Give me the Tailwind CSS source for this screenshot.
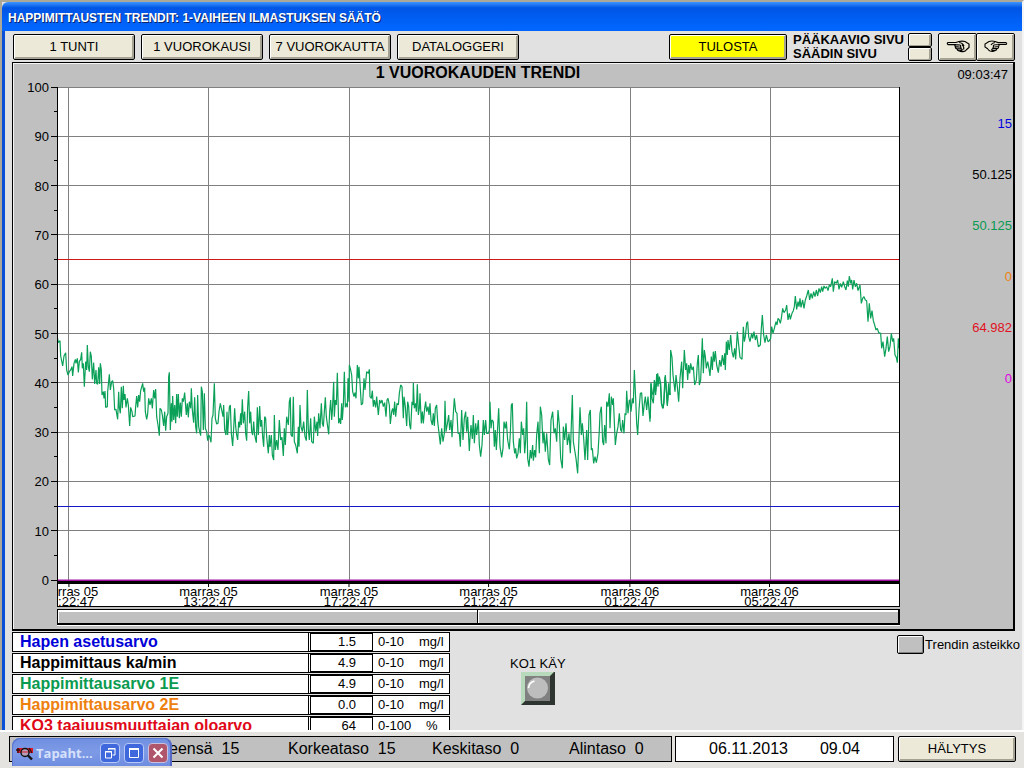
<!DOCTYPE html>
<html lang="fi">
<head>
<meta charset="utf-8">
<title>Happimittausten trendit</title>
<script src="https://cdn.jsdelivr.net/npm/@tailwindcss/browser@4"></script>
</head>
<body class="relative flex h-screen min-h-[600px] flex-col overflow-hidden bg-[#e1e1e1] font-['Liberation_Sans',Arial,sans-serif] text-[13px] leading-4 text-black">

<div class="flex min-h-0 flex-1 flex-col border-l-2 border-r-2 border-t-2 border-l-[#aca899] border-r-[#f4f4f4] border-t-[#aca899]">
  <header class="flex h-[29px] shrink-0 items-center rounded-tl-md bg-linear-to-b from-[#3d95ff] from-0% via-[#0055e5] via-20% to-[#0066ff] to-90% pl-1.5 pt-0.5">
    <h1 class="text-[12px] font-bold text-white [text-shadow:1px_1px_0_#0a246a]">HAPPIMITTAUSTEN TRENDIT: 1-VAIHEEN ILMASTUKSEN SÄÄTÖ</h1>
  </header>

  <div class="flex min-h-0 flex-1 flex-col border-l-3 border-[#0a4fd8] pl-[7px]">
    <nav class="flex h-[31px] shrink-0 items-center gap-1.5 pl-px pr-[7px]">
      <button class="h-[26px] w-[122px] rounded-xs border border-black bg-[#ece9d8] shadow-[inset_1px_1px_0_#fff,inset_-2px_-2px_0_#a5a294]">1 TUNTI</button>
      <button class="h-[26px] w-[122px] rounded-xs border border-black bg-[#ece9d8] shadow-[inset_1px_1px_0_#fff,inset_-2px_-2px_0_#a5a294]">1 VUOROKAUSI</button>
      <button class="h-[26px] w-[122px] whitespace-nowrap rounded-xs border border-black bg-[#ece9d8] shadow-[inset_1px_1px_0_#fff,inset_-2px_-2px_0_#a5a294]">7 VUOROKAUTTA</button>
      <button class="h-[26px] w-[122px] rounded-xs border border-black bg-[#ece9d8] shadow-[inset_1px_1px_0_#fff,inset_-2px_-2px_0_#a5a294]">DATALOGGERI</button>
      <button class="ml-auto h-[26px] w-[118px] rounded-xs border border-black bg-[#ffff00] shadow-[inset_1px_1px_0_#fff,inset_-2px_-2px_0_#a5a294]">TULOSTA</button>
      <div class="flex items-center gap-0.5">
        <div class="flex w-[113px] flex-col whitespace-nowrap font-bold leading-[14px]">
          <label for="main">PÄÄKAAVIO SIVU</label>
          <label for="ctrl">SÄÄDIN SIVU</label>
        </div>
        <div class="flex flex-col">
          <button id="main" class="h-3.5 w-6 rounded-xs border border-black bg-[#ece9d8] shadow-[inset_1px_1px_0_#fff,inset_-2px_-1px_0_#a5a294]"></button>
          <button id="ctrl" class="h-3.5 w-6 rounded-xs border border-black bg-[#ece9d8] shadow-[inset_1px_1px_0_#fff,inset_-2px_-1px_0_#a5a294]"></button>
        </div>
      </div>
      <div class="flex">
        <button aria-label="Edellinen" class="flex h-7 w-[39px] items-center justify-center rounded-xs border border-black bg-[#ece9d8] shadow-[inset_1px_1px_0_#fff,inset_-2px_-2px_0_#a5a294]">
          <svg width="24" height="13" viewBox="0 0 24 13" fill="none" stroke="#000" stroke-width="1.2"><path d="M10 4.600H2Q.6 3.600 2 2.500H10L13 1.500Q16 .6 19 1.500L23 4V7.500L20 10M9.500 4.600L14 5M10 4.600Q8 5.500 9.500 6.600L13 7M9.500 6.600Q9 8.500 11 8.800L14 8.800M11 8.800Q11 10.400 13 10.800L16 10.400M13 10.800Q15 12.200 18 11.400Q20 11 20 10M13 2.500Q17 3 18 6M14 5Q15.500 6 14 7Q16 7.800 14.500 8.800Q17 9 16 10.400M16 4.500Q18.500 7 17.500 9.500"/></svg>
        </button>
        <button aria-label="Seuraava" class="-ml-px flex h-7 w-[39px] items-center justify-center rounded-xs border border-black bg-[#ece9d8] shadow-[inset_1px_1px_0_#fff,inset_-2px_-2px_0_#a5a294]">
          <svg width="24" height="13" viewBox="0 0 24 13" fill="none" stroke="#000" stroke-width="1.1"><path transform="matrix(-1 0 0 1 24 0)" d="M10 4.500H2Q.6 3.600 2 2.600H10L13 1.500Q16 .6 19 1.500L23 4V7L20 9M9.500 4.500L14 5M10 4.500Q8 5.500 9.500 6.500L13 7M9.500 6.500Q9 8.500 11 8.600L14 8.600M11 8.600Q11 10.400 13 10.600L16 10.400M13 10.600Q15 12 18 11Q20 10 20 9M13 2.500Q16 3 17 5M14 5Q15.500 6 14 7Q16 7.800 14.500 8.600Q17 9 16 10.400"/></svg>
        </button>
      </div>
    </nav>

    <main class="mr-[7px] flex min-h-0 flex-1 border-b-2 border-l border-r-2 border-t border-black bg-[#c0c0c0] shadow-[inset_1px_1px_0_#f4f4f4]">
      <section class="flex min-w-0 flex-1 flex-col">
        <h2 class="flex h-6 shrink-0 items-center justify-center pb-1 pl-11 text-[16px] font-bold">1 VUOROKAUDEN TRENDI</h2>
        <div class="flex min-h-0 flex-1">
          <div class="flex w-11 flex-col pb-12">
            <svg id="yaxis" class="min-h-0 w-full flex-1 overflow-visible" stroke="none" text-anchor="end" shape-rendering="crispEdges"></svg>
          </div>
          <div class="-mr-px flex min-w-0 flex-1 flex-col">
            <svg class="min-h-0 w-full flex-1 border-l border-r border-black bg-white" viewBox="58 87 841 494" preserveAspectRatio="none" fill="none">
              <g stroke="#808080" stroke-width="1" shape-rendering="crispEdges">
                <path d="M57 87.500H900M57 136.500H900M57 185.500H900M57 234.500H900M57 284.500H900M57 333.500H900M57 382.500H900M57 432.500H900M57 481.500H900M57 530.500H900"/>
                <path d="M68.500 87V581M208.500 87V581M349.500 87V581M489.500 87V581M630.500 87V581M770.500 87V581"/>
              </g>
              <rect x="57" y="259" width="843" height="1" class="fill-[#d01818]"/>
              <rect x="57" y="506" width="843" height="1" class="fill-[#1818c8]"/>
              <rect x="57" y="579.500" width="843" height="1.500" class="fill-[#a010a0]"/>
              <g stroke="#0aa058" stroke-width="3.6" stroke-linejoin="bevel">
                <polyline transform="translate(50 320) scale(.33333)" points="20,40 25,68 30,62 32,108 38,138 42,108 47,98 50,150 54,165 58,155 62,150 66,140 68,168 72,130 76,118 78,130 82,115 85,157 88,125 92,118 95,97 97,145 100,130 103,200 107,125 110,150 112,75 115,140 118,155 121,95 124,110 127,178 131,128 134,192 138,150 140,190 143,193 146,142 149,192 151,130 154,150 156,225 160,215 162,235 165,213 167,262 172,260 173,215 178,163 181,210 185,185 188,182 191,205 194,270 198,268 203,298 206,215 208,262 211,280 214,200 217,265 220,197 222,240 225,222 228,262 232,235 235,255 239,318 242,262 246,275 248,290 255,288 257,260 260,228 263,262 266,225 269,245 272,212 278,190 281,215 284,203 286,275 290,298 293,282 296,235 300,255 304,235 307,265 311,210 314,235 317,207 320,290 324,315 328,347 330,265 334,270 337,285 341,318 344,275 347,332 350,290 354,280 356,170 358,157 361,330 364,250 366,305 368,228 371,300 374,255 377,310 380,222 382,290 385,222 388,295 391,248 394,290 397,235 400,245 404,218 407,260 409,285 412,250 415,292 418,245 422,265 424,205 427,270 431,308 434,232 437,320 440,340 443,225 446,320 449,335 452,347 454,200 457,215 460,330 463,220 466,325 470,335 473,362 476,345 479,350 483,367 486,295 489,285 493,190 496,295 500,312 504,310 507,275 511,250 515,270 519,290 521,255 524,330 528,345 531,275 533,345 538,262 541,255 544,340 548,378 551,325 554,265 557,320 560,345 563,360 566,305 569,322 572,280 574,315 577,238 580,310 584,275 587,340 590,362 593,260 596,213 599,310 602,275 605,335 608,345 611,305 614,345 619,368 622,262 625,345 629,258 632,320 635,300 638,350 641,380 644,290 647,295 650,350 655,400 658,345 660,380"/>
                <polyline transform="translate(260 350) scale(.33333)" points="30,290 34,255 37,315 41,330 43,195 46,300 50,270 54,300 58,210 62,270 66,262 70,318 73,235 76,285 80,200 85,225 88,155 91,142 93,255 97,260 100,140 103,275 107,285 112,310 115,230 117,290 120,165 123,230 127,245 131,215 135,260 139,272 142,120 145,240 148,270 152,205 155,275 160,280 163,200 167,245 171,215 173,258 176,190 180,235 184,160 187,220 190,230 193,185 196,142 199,200 203,230 206,253 209,185 212,150 215,210 217,185 221,95 223,200 226,150 229,165 232,68 236,220 239,205 242,222 245,160 247,210 250,165 253,65 256,172 259,160 262,172 264,85 267,155 268,45 272,60 275,75 278,125 282,140 285,128 288,145 292,45 295,85 297,50 300,100 304,165 308,160 312,85 315,120 320,65 325,70 328,58 330,140 334,145 337,122 340,170 343,150 347,172 350,140 355,195 359,150 362,160 366,150 370,170 374,158 378,200 381,150 384,145 388,165 391,222 395,185 398,175 401,195 404,155 407,200 411,160 415,165 418,130 422,105 426,110 430,205 432,140 436,170 440,228 443,155 446,170 449,225 452,238 456,155 459,165 460,98 463,175 467,160 469,185 472,103 475,195 478,175 480,130 484,220 487,185 490,220 494,175 497,155 500,185 504,170 507,195 510,160 513,210 517,225 520,190 523,228 526,175 530,165 533,215 536,240 541,283 545,235 549,275 553,250 555,152 558,245 562,222 566,195 569,240 573,210 576,262 580,190 583,145 587,185 591,190 594,250 598,250 601,290 605,180 609,270 613,205 617,185 620,245 623,200 628,303 630,265"/>
                <polyline transform="translate(470 370) scale(.33333)" points="0,205 3,165 7,207 10,135 13,220 17,160 20,195 25,150 28,225 32,260 36,225 40,150 43,195 47,150 50,190 55,190 58,180 60,95 63,175 66,150 70,155 73,230 76,180 79,240 83,170 86,115 90,230 95,262 99,235 102,155 106,175 109,155 113,210 118,238 121,190 124,105 127,100 130,215 134,250 137,235 140,265 144,250 148,205 151,250 154,155 158,195 161,175 164,250 167,210 170,95 173,265 177,290 181,240 184,265 188,225 190,272 194,240 197,262 200,195 204,155 208,250 211,110 215,135 219,220 222,185 226,245 230,190 235,268 239,285 243,150 248,125 252,190 256,175 260,215 264,120 268,165 272,265 277,295 280,170 284,210 288,160 292,225 297,190 301,250 304,165 307,75 310,215 314,240 318,265 323,310 327,200 330,112 334,195 337,160 341,205 345,270 350,180 353,270 357,135 361,120 364,240 367,235 371,280 375,260 379,278 384,250 388,180 390,130 394,110 398,215 401,225 404,165 408,220 410,95 414,110 418,70 420,175 424,80 428,105 430,85 434,180 436,225 440,190 444,170 448,130 452,180 455,185 458,150 462,190 465,130 468,135 470,62 474,130 478,90 480,90 483,125 487,85 490,100 493,0 497,85 500,160 503,195 507,120 511,70 515,68 519,138 523,100 526,80 530,120 534,80 537,120 540,155 543,40 547,70 550,75 553,30 557,65 560,40 563,10 567,40 571,38 574,100 578,115 582,100 586,15 589,60 592,105 596,60 600,75"/>
                <polyline transform="translate(650 270) scale(.33333)" points="60,375 62,240 66,262 69,315 72,340 75,365 78,315 82,350 86,395 90,325 95,275 98,355 103,240 107,300 110,280 113,330 116,285 119,310 122,280 126,300 130,290 134,345 139,330 142,280 145,255 148,345 152,330 157,205 160,310 163,240 166,260 169,295 173,275 176,290 180,318 184,260 187,300 190,245 193,275 196,243 200,285 205,308 209,270 213,290 217,255 221,285 224,250 226,300 229,215 232,255 234,210 238,240 242,195 246,245 250,262 254,235 257,268 262,185 266,225 270,262 276,268 280,170 283,215 286,200 290,160 293,155 296,200 300,215 305,190 308,205 312,185 316,210 320,195 325,230 331,225 334,175 337,135 341,195 345,218 349,195 354,215 358,212 362,205 365,170 369,190 373,175 378,155 381,165 384,145 388,150 391,160 394,145 398,115 402,128 407,120 410,105 414,150 418,130 421,148 426,130 430,122 433,110 436,78 440,118 444,95 447,110 450,85 453,112 458,90 462,115 466,90 470,78 475,60 479,90 483,70 487,85 491,65 495,80 499,60 503,78 507,55 511,68 515,50 518,65 522,48 525,55 530,50 534,62 538,45 542,50 547,25 550,65 554,35 559,40 563,30 567,58 571,40 575,52 580,35 584,50 588,60 592,32 595,50 598,18 602,40 605,30 608,58 612,30 616,50 620,40 624,62 630,45 634,100 638,85 642,80 646,90 650,92 654,155 658,100 662,145 666,122 670,152 674,165 678,180 682,175 686,188 692,190 695,235 699,215 704,260 708,235 712,200 716,245 720,230 724,190 728,215 731,205 735,255 739,262 742,278 745,205 747,235"/>
                <polyline transform="translate(650 270) scale(.33333)" points="1,445 3,340 6,385 10,400 14,335 17,375 20,312 24,350 28,320 32,340 35,400 40,415 45,320 48,340 52,408 56,340 60,375"/>
              </g>
            </svg>
            <svg id="xaxis" class="h-[26px] w-full shrink-0 border-b border-l border-r border-t-3 border-black bg-white" text-anchor="middle"></svg>
            <div class="mt-0.5 mb-1 flex h-4 shrink-0 border-b-2 border-l border-r-2 border-t border-black shadow-[0_1px_0_#fff]">
              <div class="w-1/2 border-r border-black shadow-[inset_1px_2px_0_#fff]"></div>
              <div class="w-1/2 shadow-[inset_1px_2px_0_#fff]"></div>
            </div>
          </div>
        </div>
      </section>
      <aside class="flex w-[114px] shrink-0 flex-col text-right">
        <time class="pr-[5px] pt-1">09:03:47</time>
        <ul class="flex flex-col gap-[35px] pr-px pt-[33px]">
          <li class="text-[#0000e0]">15</li>
          <li>50.125</li>
          <li class="text-[#0a9a50]">50.125</li>
          <li class="text-[#ee8010]">0</li>
          <li class="text-[#e01020]">64.982</li>
          <li class="text-[#e000e0]">0</li>
        </ul>
      </aside>
    </main>

    <section class="flex h-[99px] shrink-0 items-start overflow-hidden">
      <table class="w-[438px] table-fixed border-separate border-spacing-x-0 border-spacing-y-px text-left">
        <tbody>
          <tr><th class="h-5 w-[297px] border border-black bg-white p-0 pl-[7px] text-[16px] leading-4 text-[#0000d8]">Hapen asetusarvo</th><td class="h-5 border border-l-0 border-black bg-white p-0 pl-px"><div class="flex items-center"><span class="w-[63px] border border-black pr-4 text-right">1.5</span><span class="w-[46px] pl-[5px]">0-10</span><span>mg/l</span></div></td></tr>
          <tr><th class="h-5 border border-black bg-white p-0 pl-[7px] text-[16px] leading-4">Happimittaus ka/min</th><td class="h-5 border border-l-0 border-black bg-white p-0 pl-px"><div class="flex items-center"><span class="w-[63px] border border-black pr-4 text-right">4.9</span><span class="w-[46px] pl-[5px]">0-10</span><span>mg/l</span></div></td></tr>
          <tr><th class="h-5 border border-black bg-white p-0 pl-[7px] text-[16px] leading-4 text-[#0a9a50]">Happimittausarvo 1E</th><td class="h-5 border border-l-0 border-black bg-white p-0 pl-px"><div class="flex items-center"><span class="w-[63px] border border-black pr-4 text-right">4.9</span><span class="w-[46px] pl-[5px]">0-10</span><span>mg/l</span></div></td></tr>
          <tr><th class="h-5 border border-black bg-white p-0 pl-[7px] text-[16px] leading-4 text-[#ee8010]">Happimittausarvo 2E</th><td class="h-5 border border-l-0 border-black bg-white p-0 pl-px"><div class="flex items-center"><span class="w-[63px] border border-black pr-4 text-right">0.0</span><span class="w-[46px] pl-[5px]">0-10</span><span>mg/l</span></div></td></tr>
          <tr><th class="h-5 border border-black bg-white p-0 pl-[7px] text-[16px] leading-4 text-[#e00818]">KO3 taajuusmuuttajan oloarvo</th><td class="h-5 border border-l-0 border-black bg-white p-0 pl-px"><div class="flex items-center"><span class="w-[63px] border border-black pr-4 text-right">64</span><span class="w-[53px] pl-[5px]">0-100</span><span>%</span></div></td></tr>
        </tbody>
      </table>
      <div class="ml-[60px] flex flex-col items-center pt-[25px]">
        <span>KO1 KÄY</span>
        <svg width="34" height="33" viewBox="0 0 34 33" class="shrink-0">
          <path fill="#2e3430" d="M0 0H34V33H0Z"/><path fill="#b9d9bd" d="M0 0H33L29 4H4V29L0 33Z"/>
          <path fill="#808080" d="M4 4H29V29H4Z"/><circle cx="16.500" cy="16" r="10.500" fill="#bdbdbd"/>
          <path d="M7.500 16Q8 10.500 13.500 9" fill="none" stroke="#fff" stroke-width="1.600"/>
        </svg>
      </div>
      <label class="ml-auto flex items-center gap-px whitespace-nowrap pr-0.5 pt-1"><button class="h-[19px] w-[27px] rounded-xs border border-black bg-[#c0c0c0] shadow-[inset_1px_1px_0_#fff,inset_-1px_-1px_0_#808080]"></button>Trendin asteikko</label>
    </section>
  </div>
</div>

<footer class="flex h-[38px] shrink-0 items-start gap-[3px] border-t-2 border-white bg-[#e4e3df] pl-[9px] pr-2 pt-1 text-[16px]">
  <div class="flex h-[26px] flex-1 items-center whitespace-pre border border-black bg-[#c0c0c0]">
    <span class="w-[278px] pl-[135px]">Yhteensä  15</span>
    <span class="w-36">Korkeataso  15</span>
    <span class="w-[137px]">Keskitaso  0</span>
    <span>Alintaso  0</span>
  </div>
  <div class="flex h-[26px] w-[219px] items-center justify-center gap-8 border border-black bg-white"><span>06.11.2013</span><span>09.04</span></div>
  <button class="ml-px h-[26px] w-[118px] rounded-xs border border-black bg-[#ece9d8] text-[13px] shadow-[inset_1px_1px_0_#fff,inset_-2px_-2px_0_#a5a294]">HÄLYTYS</button>
</footer>

<!-- Minimised child window lying over the status bar -->
<div class="absolute bottom-0.5 left-3 flex h-7 w-40 items-center gap-0.5 rounded-t-lg bg-linear-to-b from-[#6f8fe0] via-[#7d9ae6] to-[#6f8de0] pl-1 pr-1 pt-0.5 shadow-[inset_1px_1px_0_#5a76d0,inset_-2px_0_0_#5568c4]">
  <svg width="18" height="16" viewBox="0 0 18 16" class="shrink-0"><path fill="#d81828" d="M1 3H17V8H1Z"/><path stroke="#301010" fill="none" stroke-width="1.300" d="M0 5H4M2 3V8M13 3L16 8"/><circle cx="9" cy="7.500" r="4" fill="#b8a0b8" stroke="#111" stroke-width="1.400"/><path stroke="#111" stroke-width="2.400" d="M12 10.500L16 14.500"/><path stroke="#d81828" d="M6 7H12"/></svg>
  <span class="flex-1 whitespace-nowrap font-['Open_Sans','Liberation_Sans',sans-serif] font-bold text-[#d6e0fa]">Tapaht...</span>
  <button aria-label="Palauta" class="flex size-5 items-center justify-center rounded-sm border border-[#b9c9f6] bg-[#3f68dc]"><svg width="12" height="12" viewBox="0 0 12 12" fill="none" stroke="#fff"><path d="M4.500 3V1.500H11V8H8.500M4 2H11.500M1.500 4.500H7.500V11H1.500ZM1 5H8"/></svg></button>
  <button aria-label="Suurenna" class="ml-0.5 flex size-5 items-center justify-center rounded-sm border border-[#b9c9f6] bg-[#3f68dc]"><svg width="12" height="12" viewBox="0 0 12 12" fill="none" stroke="#fff"><path d="M1.500 1.500H10.500V10.500H1.500Z"/><path stroke-width="2" d="M1 2H11"/></svg></button>
  <button aria-label="Sulje" class="ml-0.5 flex size-5 items-center justify-center rounded-sm border border-[#c9c0e0] bg-[#b0566c]"><svg width="12" height="12" viewBox="0 0 12 12" stroke="#fff" stroke-width="2"><path d="M1.500 1.500L10.500 10.500M10.500 1.500L1.500 10.500"/></svg></button>
</div>

<script>
  // Value axis: labels every 10 units, short ticks between
  let y = '';
  for (let v = 0; v <= 100; v += 5) {
    const p = (100 - v) * 0.998 + '%', major = v % 10 === 0;
    y += `<line x1="${major ? 38 : 41}" x2="44" y1="${p}" y2="${p}" stroke="#000"/>`;
    if (major) y += `<text x="36" y="${p}" dy="5" fill="#000">${v}</text>`;
  }
  document.getElementById('yaxis').innerHTML = y;

  // Time axis
  const ticks = [['05', '09', 1.3], ['05', '13', 17.9], ['05', '17', 34.6], ['05', '21', 51.2], ['06', '01', 68], ['06', '05', 84.6]];
  document.getElementById('xaxis').innerHTML = ticks.map(([d, h, x]) =>
    `<line x1="${x}%" x2="${x}%" y1="0" y2="3" stroke="#000"/><text x="${x}%" y="12">marras ${d}</text><text x="${x}%" y="22">${h}:22:47</text>`).join('');
</script>
</body>
</html>
